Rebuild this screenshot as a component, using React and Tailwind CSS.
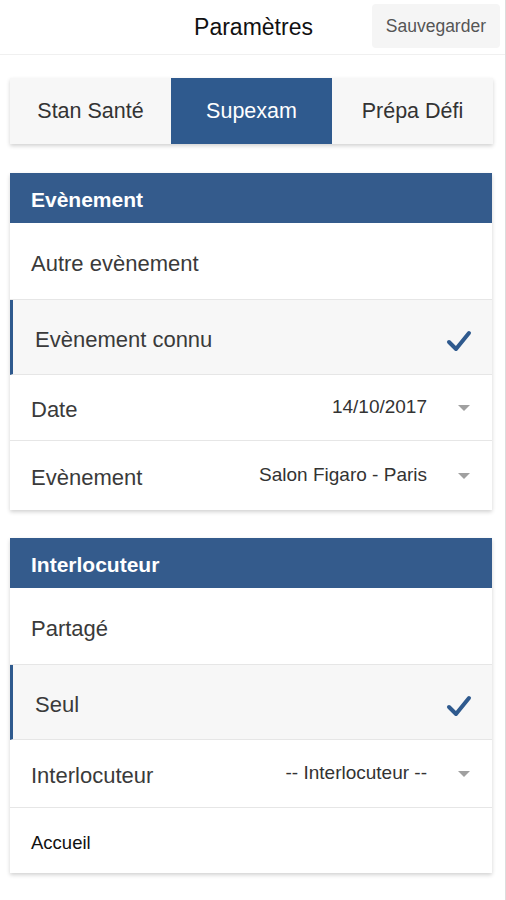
import React from "react";

const Check = () => (
  <svg width="26" height="24" viewBox="0 0 26 24" className="shrink-0">
    <path d="M3 13 L10 20 L23 4" fill="none" stroke="#2f5a8e" strokeWidth="4" strokeLinecap="round" strokeLinejoin="round" />
  </svg>
);

const Caret = () => (
  <span className="ml-[31px] w-0 h-0 border-l-[6px] border-r-[6px] border-t-[6px] border-l-transparent border-r-transparent border-t-[#a0a0a0]" />
);

const Row = ({ label, h, selected, value, small, last }) => (
  <div
    className={`flex items-center pt-[4px] pr-[20px] ${
      selected ? "bg-[#f7f7f7] border-l-[3px] border-[#2f5a8e] pl-[22px]" : "pl-[21px]"
    } ${last ? "" : "border-b border-b-[#e6e6e6]"} ${h}`}
  >
    <span className={small ? "text-[18.5px] text-[#111]" : "text-[22px] text-[#3a3a3a]"}>{label}</span>
    <div className="flex-1" />
    {selected && <div className="mt-1"><Check /></div>}
    {value && (
      <div className="flex items-center mr-[2px] -mt-[4px]">
        <span className="text-[19px] text-[#333]">{value}</span>
        <Caret />
      </div>
    )}
  </div>
);

const Card = ({ title, children }) => (
  <div className="ml-[10px] mr-[13px] bg-white shadow-[0_2px_4px_rgba(0,0,0,0.18)]">
    <div className="h-[50px] pt-[3px] bg-[#345b8c] flex items-center pl-[21px] text-white text-[21px] font-semibold">
      {title}
    </div>
    {children}
  </div>
);

export default function App() {
  const tabs = ["Stan Santé", "Supexam", "Prépa Défi"];
  return (
    <div className="w-[506px] h-[900px] bg-white border-r border-[#dcdcdc] font-['Liberation_Sans',Arial,sans-serif] overflow-hidden">
      <div className="h-[55px] flex items-center relative border-b border-[#f0f0f0]">
        <div className="flex-1 text-center text-[23px] text-[#111] pl-[2px]">Paramètres</div>
        <button className="absolute right-[5px] top-[4px] h-[44px] px-[14px] bg-[#f5f5f5] text-[17.5px] text-[#555] rounded-sm">
          Sauvegarder
        </button>
      </div>

      <div className="ml-[10px] mr-[12px] mt-[23px] h-[66px] flex bg-[#f7f7f7] shadow-[0_2px_4px_rgba(0,0,0,0.18)]">
        {tabs.map((t, i) => (
          <div
            key={t}
            className={`flex-1 flex items-center justify-center text-[21.5px] ${
              i === 1 ? "bg-[#2f5a8e] text-white" : "text-[#333]"
            }`}
          >
            {t}
          </div>
        ))}
      </div>

      <div className="mt-[29px]">
        <Card title="Evènement">
          <Row label="Autre evènement" h="h-[77px]" />
          <Row label="Evènement connu" h="h-[75px]" selected />
          <Row label="Date" h="h-[66px]" value="14/10/2017" />
          <Row label="Evènement" h="h-[69px]" value="Salon Figaro - Paris" last />
        </Card>
      </div>

      <div className="mt-[28px]">
        <Card title="Interlocuteur">
          <Row label="Partagé" h="h-[77px]" />
          <Row label="Seul" h="h-[75px]" selected />
          <Row label="Interlocuteur" h="h-[68px]" value="-- Interlocuteur --" />
          <Row label="Accueil" h="h-[65px]" small last />
        </Card>
      </div>
    </div>
  );
}
